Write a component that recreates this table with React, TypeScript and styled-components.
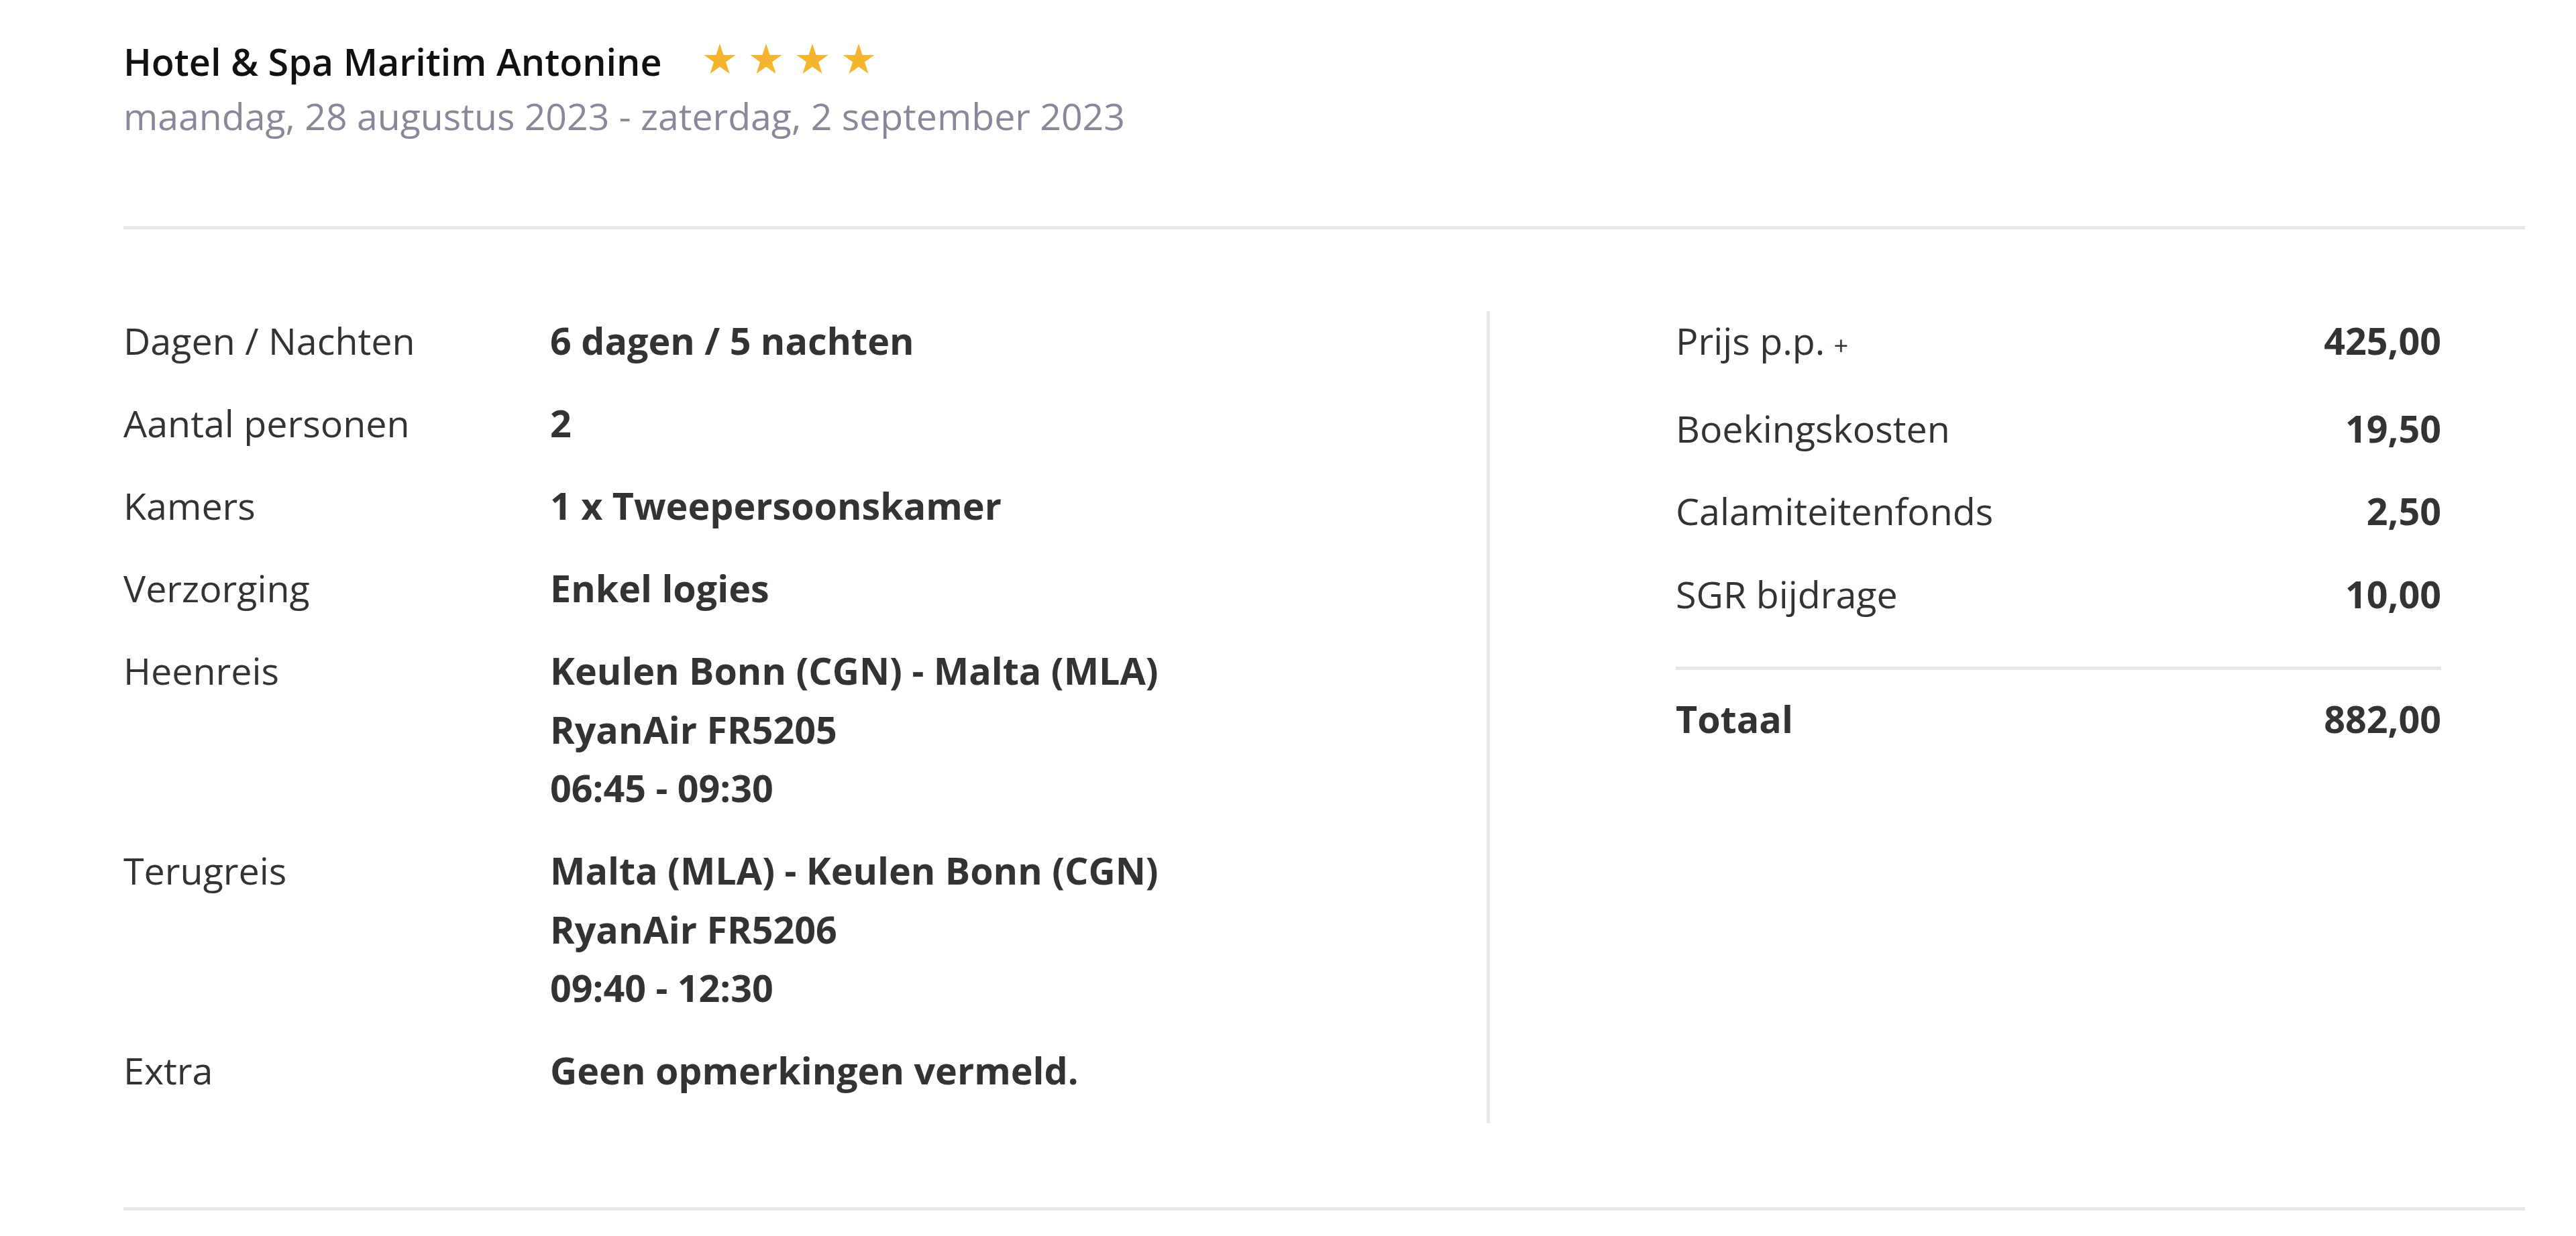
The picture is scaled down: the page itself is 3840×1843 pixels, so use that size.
import React from 'react';
import styled, { createGlobalStyle } from 'styled-components';

const GlobalStyle = createGlobalStyle`
  body {
    margin: 0;
    background: #fff;
    font-family: "Open Sans", "Liberation Sans", sans-serif;
    color: #333;
  }
`;

const Page = styled.div`
  padding: 50px 76px 0 184px;
`;

const TitleRow = styled.div`
  display: flex;
  align-items: center;
  gap: 62px;
`;

const HotelName = styled.h1`
  margin: 0;
  font-size: 55.7px;
  line-height: 82px;
  font-weight: 600;
  color: #111;
`;

const Stars = styled.div`
  display: flex;
  gap: 21px;
  margin-bottom: 6px;
`;

const DateLine = styled.div`
  font-size: 55.4px;
  line-height: 82px;
  color: #8a879b;
`;

const Rule = styled.div<{ $top: number }>`
  height: 5px;
  background: #e6e6e6;
  margin-top: ${(p) => p.$top}px;
`;

const Details = styled.div`
  display: grid;
  grid-template-columns: 2032px 1fr;
  margin-top: 122px;
`;

const LeftColumn = styled.div``;

const InfoRow = styled.div`
  display: grid;
  grid-template-columns: 636px 1fr;
  font-size: 55.6px;
  line-height: 87.5px;
  margin-bottom: 35.5px;
`;

const Label = styled.div`
  font-weight: 400;
  color: #333;
`;

const Value = styled.div`
  font-weight: 700;
  color: #333;
`;

const RightColumn = styled.div`
  border-left: 5px solid #e8e8e8;
  padding: 0 125px 0 277px;
`;

const PriceRow = styled.div<{ $total?: boolean }>`
  display: flex;
  justify-content: space-between;
  font-size: 55.6px;
  line-height: 87.5px;
  margin-bottom: ${(p) => (p.$total ? 0 : 36)}px;
  font-weight: ${(p) => (p.$total ? 700 : 400)};
`;

const PriceValue = styled.span`
  font-weight: 700;
`;

const Plus = styled.span`
  font-size: 38px;
  margin-left: 13px;
`;

const PriceRule = styled.div`
  height: 5px;
  background: #e6e6e6;
  margin: 65px 0 29px;
`;

const Star = () => (
  <svg width="48" height="46" viewBox="0 0 48 46">
    <polygon
      points="24,0 29.6,17 47.5,17 33,27.6 38.6,45 24,34.4 9.4,45 15,27.6 0.5,17 18.4,17"
      fill="#f6b52f"
    />
  </svg>
);

const details: { label: string; lines: string[] }[] = [
  { label: 'Dagen / Nachten', lines: ['6 dagen / 5 nachten'] },
  { label: 'Aantal personen', lines: ['2'] },
  { label: 'Kamers', lines: ['1 x Tweepersoonskamer'] },
  { label: 'Verzorging', lines: ['Enkel logies'] },
  { label: 'Heenreis', lines: ['Keulen Bonn (CGN) - Malta (MLA)', 'RyanAir FR5205', '06:45 - 09:30'] },
  { label: 'Terugreis', lines: ['Malta (MLA) - Keulen Bonn (CGN)', 'RyanAir FR5206', '09:40 - 12:30'] },
  { label: 'Extra', lines: ['Geen opmerkingen vermeld.'] },
];

const prices = [
  { label: 'Boekingskosten', value: '19,50' },
  { label: 'Calamiteitenfonds', value: '2,50' },
  { label: 'SGR bijdrage', value: '10,00' },
];

const App: React.FC = () => {
  return (
    <>
      <GlobalStyle />
      <Page>
        <TitleRow>
          <HotelName>Hotel &amp; Spa Maritim Antonine</HotelName>
          <Stars>
            {[0, 1, 2, 3].map((i) => (
              <Star key={i} />
            ))}
          </Stars>
        </TitleRow>
        <DateLine>maandag, 28 augustus 2023 - zaterdag, 2 september 2023</DateLine>

        <Rule $top={123} />

        <Details>
          <LeftColumn>
            {details.map((d) => (
              <InfoRow key={d.label}>
                <Label>{d.label}</Label>
                <Value>
                  {d.lines.map((l) => (
                    <div key={l}>{l}</div>
                  ))}
                </Value>
              </InfoRow>
            ))}
          </LeftColumn>

          <RightColumn>
            <PriceRow>
              <span>
                Prijs p.p.<Plus>+</Plus>
              </span>
              <PriceValue>425,00</PriceValue>
            </PriceRow>
            {prices.map((p) => (
              <PriceRow key={p.label}>
                <span>{p.label}</span>
                <PriceValue>{p.value}</PriceValue>
              </PriceRow>
            ))}
            <PriceRule />
            <PriceRow $total>
              <span>Totaal</span>
              <span>882,00</span>
            </PriceRow>
          </RightColumn>
        </Details>

        <Rule $top={125} />
      </Page>
    </>
  );
};

export default App;
